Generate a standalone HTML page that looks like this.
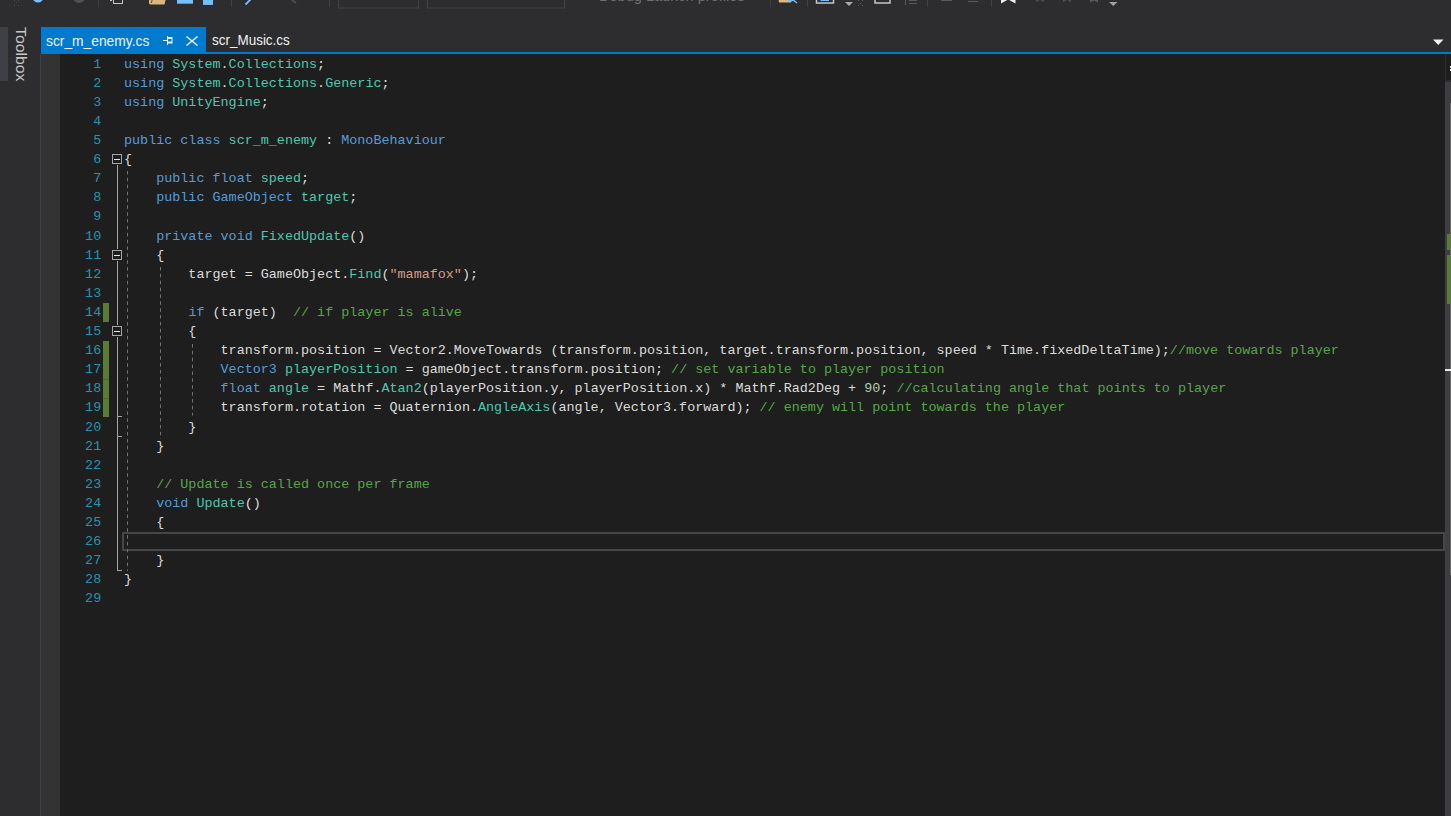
<!DOCTYPE html>
<html><head><meta charset="utf-8">
<style>
html,body{margin:0;padding:0;}
body{width:1451px;height:816px;overflow:hidden;background:#2d2d30;position:relative;font-family:"Liberation Sans",sans-serif;}
.a{position:absolute;}
svg.a{overflow:visible;}
.cl,.ln{position:absolute;height:19px;line-height:19px;font-family:"Liberation Mono",monospace;font-size:13.42px;white-space:pre;}
.cl{left:124px;}
.ln{left:60px;width:41.2px;text-align:right;color:#2b91af;}
.tt{position:absolute;font-size:15.4px;color:#f1f1f1;white-space:pre;transform-origin:0 0;line-height:18px;}
</style></head>
<body>
<!-- toolbar slivers -->
<svg class="a" style="left:0;top:0" width="1451" height="12">
 <g fill="#4a4a4a"><rect x="14" y="0" width="1" height="1"/><rect x="18" y="0" width="1" height="1"/><rect x="16" y="2" width="1" height="1"/><rect x="14" y="5" width="1" height="1"/><rect x="18" y="5" width="1" height="1"/></g>
 <circle cx="38" cy="-3" r="5.5" fill="#75beff"/>
 <circle cx="79" cy="-3.5" r="6.5" fill="#505050"/>
 <rect x="98" y="0" width="1" height="7" fill="#3f3f46"/>
 <rect x="113.5" y="-4" width="9" height="7.5" fill="none" stroke="#c5c5c5" stroke-width="1"/>
 <rect x="110" y="0" width="2" height="1" fill="#c5c5c5"/>
 <path d="M149 -4 L166.5 -4 L164.5 4.5 L151 4.5 Q149 4.5 149 3 Z" fill="#dcb67a"/><path d="M152.5 -1 L151.2 3" stroke="#3a3020" stroke-width="0.8"/>
 <rect x="177" y="-4" width="16" height="7.7" fill="#75beff"/>
 <rect x="203" y="-4" width="10" height="8.9" fill="#75beff"/>
 <rect x="231" y="0" width="1" height="7" fill="#3f3f46"/>
 <path d="M245.5 4.5 L251 -1" stroke="#75beff" stroke-width="1.8"/>
 <path d="M291 -1 L296 3" stroke="#505050" stroke-width="1.8"/>
 <rect x="329" y="0" width="1" height="7" fill="#3f3f46"/>
 <rect x="338.5" y="-10" width="80" height="18" fill="none" stroke="#434346"/>
 <rect x="427.5" y="-10" width="137" height="18" fill="none" stroke="#434346"/>
 <rect x="770" y="0" width="1" height="7" fill="#3f3f46"/>
 <path d="M778 -4 L792 -4 L791 2.5 L779 2.5 Z" fill="#dcb67a"/>
 <path d="M787 -1 Q790 2.5 793 0 L797 3" fill="none" stroke="#75beff" stroke-width="1.5"/>
 <rect x="807" y="0" width="1" height="7" fill="#3f3f46"/>
 <rect x="816.5" y="-6" width="17" height="9" fill="none" stroke="#c5c5c5" stroke-width="1.5"/>
 <rect x="820.5" y="-3" width="8.5" height="4" fill="#75beff"/>
 <path d="M845 2 L853 2 L849 6 Z" fill="#a8a8a8"/>
 <g fill="#5a5a5a"><rect x="858" y="0" width="1" height="1"/><rect x="862" y="0" width="1" height="1"/><rect x="860" y="3" width="1" height="1"/><rect x="858" y="5" width="1" height="1"/><rect x="862" y="5" width="1" height="1"/></g>
 <rect x="875" y="-6" width="15" height="9" fill="none" stroke="#c5c5c5" stroke-width="1.5"/>
 <rect x="905" y="-4" width="1" height="9" fill="#5a5a5a"/>
 <rect x="909" y="0" width="8" height="1" fill="#5a5a5a"/><rect x="909" y="3" width="8" height="1" fill="#5a5a5a"/>
 <rect x="927" y="0" width="1" height="7" fill="#3f3f46"/>
 <rect x="941" y="0" width="11" height="1" fill="#5a5a5a"/>
 <rect x="968" y="1" width="10" height="1" fill="#5a5a5a"/>
 <rect x="991" y="0" width="1" height="7" fill="#3f3f46"/>
 <path d="M1001 -6 L1015.5 -6 L1015.5 3.5 L1008.2 -0.5 L1001 3.5 Z" fill="#f0f0f0"/>
 <path d="M1036 -6 L1044 -6 L1044 2 L1040 0 L1036 2 Z" fill="#505050"/>
 <path d="M1063 -6 L1071 -6 L1071 2 L1067 0 L1063 2 Z" fill="#505050"/>
 <path d="M1090 -6 L1098 -6 L1098 2.5 L1094 0.5 L1090 2.5 Z" fill="#5c5c5c"/>
 <path d="M1109 2 L1117.5 2 L1113.2 6 Z" fill="#a0a0a0"/>
</svg>
<div class="tt" style="left:599px;top:-13.2px;font-size:15px;color:#707070;transform:scaleX(0.97)">Debug Launch profiles</div>
<!-- left toolbox strip -->
<div class="a" style="left:0;top:27px;width:8px;height:54px;background:#3f3f46"></div>
<div class="tt" style="left:30px;top:27px;transform:rotate(90deg) scaleX(1.025);color:#c8c8c8">Toolbox</div>
<div class="a" style="left:40px;top:54px;width:1px;height:762px;background:#3f3f46"></div>
<div class="a" style="left:41px;top:54px;width:19px;height:762px;background:#333333"></div>
<div class="a" style="left:60px;top:54px;width:1385px;height:762px;background:#1e1e1e"></div>
<!-- scrollbar -->
<div class="a" style="left:1445px;top:54px;width:6px;height:28px;background:#2d2d30"></div>
<div class="a" style="left:1446px;top:54px;width:5px;height:26px;background:#1e1e1e"></div>
<div class="a" style="left:1450px;top:66px;width:1px;height:2px;background:#f0f0f0"></div>
<div class="a" style="left:1450px;top:69px;width:1px;height:2px;background:#f0f0f0"></div>
<div class="a" style="left:1445px;top:82px;width:6px;height:734px;background:#3e3e42"></div>
<div class="a" style="left:1450px;top:103px;width:1px;height:472px;background:#686868"></div>
<div class="a" style="left:1447px;top:234px;width:4px;height:16px;background:#587c36"></div>
<div class="a" style="left:1447px;top:255px;width:4px;height:49px;background:#587c36"></div>
<div class="a" style="left:1445px;top:369px;width:6px;height:2px;background:#e8e8e8"></div>
<!-- tabs -->
<div class="a" style="left:41px;top:27px;width:165px;height:27px;background:#007acc"></div>
<div class="a" style="left:41px;top:52px;width:1410px;height:2px;background:#007acc"></div>
<div class="tt" style="left:46px;top:32px;transform:scaleX(0.897)">scr_m_enemy.cs</div>
<div class="tt" style="left:211.5px;top:31px;transform:scaleX(0.875)">scr_Music.cs</div>
<svg class="a" style="left:160px;top:30px" width="44" height="22">
 <rect x="3" y="10" width="4" height="1" fill="#e8f0f8"/>
 <rect x="7" y="6" width="1" height="9" fill="#e8f0f8"/>
 <path d="M8 7 H12.5 V13.5 H8 Z M8 9 V11.5 H11.5 V9 Z" fill="#e8f0f8" fill-rule="evenodd"/>
 <path d="M26.5 6.5 L37.5 15.5 M37.5 6.5 L26.5 15.5" stroke="#e8f0f8" stroke-width="1.6"/>
</svg>
<svg class="a" style="left:1430px;top:37px" width="16" height="10"><path d="M3 2.5 H13.5 L8.25 8 Z" fill="#f0f0f0"/></svg>
<!-- gutter marks -->
<div class="a" style="left:103px;top:303px;width:6px;height:19px;background:#587c36"></div>
<div class="a" style="left:103px;top:341px;width:6px;height:76px;background:#587c36"></div>
<div class="a" style="left:103px;top:379px;width:6px;height:1px;background:#4c6a2f"></div>
<div class="a" style="left:103px;top:398px;width:6px;height:1px;background:#4c6a2f"></div>
<!-- current line -->
<div class="a" style="left:122px;top:532px;width:1319px;height:15px;border:2px solid #464646"></div>
<svg class="a" style="left:127px;top:170.9px" width="1" height="400.1"><line x1="0.5" y1="0" x2="0.5" y2="400.1" stroke="#727272" stroke-width="1" stroke-dasharray="3.5 3.37"/></svg>
<svg class="a" style="left:160px;top:267px" width="1" height="172.0"><line x1="0.5" y1="0" x2="0.5" y2="172.0" stroke="#727272" stroke-width="1" stroke-dasharray="3.5 3.37"/></svg>
<svg class="a" style="left:192px;top:343.5px" width="1" height="71.5"><line x1="0.5" y1="0" x2="0.5" y2="71.5" stroke="#727272" stroke-width="1" stroke-dasharray="3.5 3.37"/></svg>
<div class="a" style="left:112px;top:154px;width:8px;height:8px;border:1px solid #a5a5a5"></div><div class="a" style="left:114px;top:159px;width:6px;height:1px;background:#e8e8e8"></div>
<div class="a" style="left:112px;top:250px;width:8px;height:8px;border:1px solid #a5a5a5"></div><div class="a" style="left:114px;top:255px;width:6px;height:1px;background:#e8e8e8"></div>
<div class="a" style="left:112px;top:326px;width:8px;height:8px;border:1px solid #a5a5a5"></div><div class="a" style="left:114px;top:331px;width:6px;height:1px;background:#e8e8e8"></div>
<div class="a" style="left:117px;top:165px;width:1px;height:84px;background:#a5a5a5"></div>
<div class="a" style="left:117px;top:261px;width:1px;height:64px;background:#a5a5a5"></div>
<div class="a" style="left:117px;top:337px;width:1px;height:234px;background:#a5a5a5"></div>
<div class="a" style="left:118px;top:416px;width:4px;height:1px;background:#a5a5a5"></div>
<div class="a" style="left:118px;top:436px;width:4px;height:1px;background:#a5a5a5"></div>
<div class="a" style="left:118px;top:570px;width:4px;height:1px;background:#a5a5a5"></div>
<!-- code -->
<div class="ln" style="top:54.60px">1</div>
<div class="ln" style="top:73.70px">2</div>
<div class="ln" style="top:92.80px">3</div>
<div class="ln" style="top:111.90px">4</div>
<div class="ln" style="top:131.00px">5</div>
<div class="ln" style="top:150.10px">6</div>
<div class="ln" style="top:169.20px">7</div>
<div class="ln" style="top:188.30px">8</div>
<div class="ln" style="top:207.40px">9</div>
<div class="ln" style="top:226.50px">10</div>
<div class="ln" style="top:245.60px">11</div>
<div class="ln" style="top:264.70px">12</div>
<div class="ln" style="top:283.80px">13</div>
<div class="ln" style="top:302.90px">14</div>
<div class="ln" style="top:322.00px">15</div>
<div class="ln" style="top:341.10px">16</div>
<div class="ln" style="top:360.20px">17</div>
<div class="ln" style="top:379.30px">18</div>
<div class="ln" style="top:398.40px">19</div>
<div class="ln" style="top:417.50px">20</div>
<div class="ln" style="top:436.60px">21</div>
<div class="ln" style="top:455.70px">22</div>
<div class="ln" style="top:474.80px">23</div>
<div class="ln" style="top:493.90px">24</div>
<div class="ln" style="top:513.00px">25</div>
<div class="ln" style="top:532.10px">26</div>
<div class="ln" style="top:551.20px">27</div>
<div class="ln" style="top:570.30px">28</div>
<div class="ln" style="top:589.40px">29</div>
<div class="cl" style="top:54.60px"><span style="color:#569cd6">using </span><span style="color:#4ec9b0">System</span><span style="color:#dcdcdc">.</span><span style="color:#4ec9b0">Collections</span><span style="color:#dcdcdc">;</span></div>
<div class="cl" style="top:73.70px"><span style="color:#569cd6">using </span><span style="color:#4ec9b0">System</span><span style="color:#dcdcdc">.</span><span style="color:#4ec9b0">Collections</span><span style="color:#dcdcdc">.</span><span style="color:#4ec9b0">Generic</span><span style="color:#dcdcdc">;</span></div>
<div class="cl" style="top:92.80px"><span style="color:#569cd6">using </span><span style="color:#4ec9b0">UnityEngine</span><span style="color:#dcdcdc">;</span></div>
<div class="cl" style="top:131.00px"><span style="color:#569cd6">public class </span><span style="color:#4ec9b0">scr_m_enemy</span><span style="color:#dcdcdc"> : </span><span style="color:#569cd6">MonoBehaviour</span></div>
<div class="cl" style="top:150.10px"><span style="color:#dcdcdc">{</span></div>
<div class="cl" style="top:169.20px"><span style="color:#569cd6">    public float </span><span style="color:#4ec9b0">speed</span><span style="color:#dcdcdc">;</span></div>
<div class="cl" style="top:188.30px"><span style="color:#569cd6">    public </span><span style="color:#569cd6">GameObject</span><span style="color:#dcdcdc"> </span><span style="color:#4ec9b0">target</span><span style="color:#dcdcdc">;</span></div>
<div class="cl" style="top:226.50px"><span style="color:#569cd6">    private void </span><span style="color:#4ec9b0">FixedUpdate</span><span style="color:#dcdcdc">()</span></div>
<div class="cl" style="top:245.60px"><span style="color:#dcdcdc">    {</span></div>
<div class="cl" style="top:264.70px"><span style="color:#dcdcdc">        target = GameObject.</span><span style="color:#4ec9b0">Find</span><span style="color:#dcdcdc">(</span><span style="color:#d69d85">&quot;mamafox&quot;</span><span style="color:#dcdcdc">);</span></div>
<div class="cl" style="top:302.90px"><span style="color:#dcdcdc">        </span><span style="color:#569cd6">if</span><span style="color:#dcdcdc"> (target)  </span><span style="color:#57a64a">// if player is alive</span></div>
<div class="cl" style="top:322.00px"><span style="color:#dcdcdc">        {</span></div>
<div class="cl" style="top:341.10px"><span style="color:#dcdcdc">            transform.position = Vector2.MoveTowards (transform.position, target.transform.position, speed * Time.fixedDeltaTime);</span><span style="color:#57a64a">//move towards player</span></div>
<div class="cl" style="top:360.20px"><span style="color:#dcdcdc">            </span><span style="color:#569cd6">Vector3</span><span style="color:#dcdcdc"> </span><span style="color:#4ec9b0">playerPosition</span><span style="color:#dcdcdc"> = gameObject.transform.position; </span><span style="color:#57a64a">// set variable to player position</span></div>
<div class="cl" style="top:379.30px"><span style="color:#dcdcdc">            </span><span style="color:#569cd6">float</span><span style="color:#dcdcdc"> </span><span style="color:#4ec9b0">angle</span><span style="color:#dcdcdc"> = Mathf.</span><span style="color:#4ec9b0">Atan2</span><span style="color:#dcdcdc">(playerPosition.y, playerPosition.x) * Mathf.Rad2Deg + </span><span style="color:#b5cea8">90</span><span style="color:#dcdcdc">; </span><span style="color:#57a64a">//calculating angle that points to player</span></div>
<div class="cl" style="top:398.40px"><span style="color:#dcdcdc">            transform.rotation = Quaternion.</span><span style="color:#4ec9b0">AngleAxis</span><span style="color:#dcdcdc">(angle, Vector3.forward); </span><span style="color:#57a64a">// enemy will point towards the player</span></div>
<div class="cl" style="top:417.50px"><span style="color:#dcdcdc">        }</span></div>
<div class="cl" style="top:436.60px"><span style="color:#dcdcdc">    }</span></div>
<div class="cl" style="top:474.80px"><span style="color:#dcdcdc">    </span><span style="color:#57a64a">// Update is called once per frame</span></div>
<div class="cl" style="top:493.90px"><span style="color:#dcdcdc">    </span><span style="color:#569cd6">void </span><span style="color:#4ec9b0">Update</span><span style="color:#dcdcdc">()</span></div>
<div class="cl" style="top:513.00px"><span style="color:#dcdcdc">    {</span></div>
<div class="cl" style="top:551.20px"><span style="color:#dcdcdc">    }</span></div>
<div class="cl" style="top:570.30px"><span style="color:#dcdcdc">}</span></div>
</body></html>
